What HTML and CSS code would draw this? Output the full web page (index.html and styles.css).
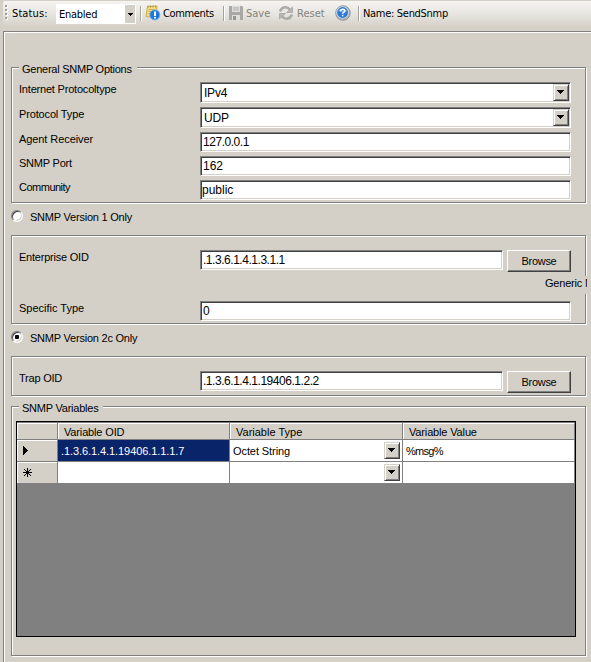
FILE: index.html
```html
<!DOCTYPE html>
<html lang="en">
<head>
<meta charset="utf-8">
<title>SendSnmp</title>
<link rel="stylesheet" href="styles.css">
</head>
<body>
<header class="toolbar">
  <span class="grip"><i></i><i></i><i></i><i></i></span>
  <span class="status-label">Status:</span>
  <div class="status-combo"><span>Enabled</span><b><svg width="5" height="3" viewBox="0 0 5 3" shape-rendering="crispEdges"><path d="M0 0h5v1H0zM1 1h3v1H1zM2 2h1v1H2z"/></svg></b></div>
  <span class="sep sep-first"></span>
  <svg class="icon" width="16" height="16" viewBox="0 0 16 16">
    <path d="M2.5 1.5l9.5-.5-1 12-10-1.5z" fill="#f7e07a" stroke="#c6a548" stroke-width=".9"/>
    <path d="M3 2.5V.5M5.5 2.5V.5M8 2.5V.5M10.5 2.5V.5" stroke="#a88f45" stroke-width=".9"/>
    <path d="M3.5 4.5h6M3.3 6.5h3M3 8.5h2" stroke="#c4a850" stroke-width=".8"/>
    <circle cx="9.8" cy="9.9" r="5" fill="#1c78dc" stroke="#6fa6e6" stroke-width=".9"/>
    <path d="M9 6.5h2V11H9zM9 12h2v1.6H9z" fill="#fff"/>
  </svg>
  <span class="t-comments">Comments</span>
  <span class="sep sep-save"></span>
  <svg class="icon" width="16" height="16" viewBox="0 0 16 16">
    <path d="M1 1h13l1 1v13H1z" fill="#a9a8a6"/>
    <path d="M4 1h8v6H4zM4 10h8v5H4z" fill="#dededc"/>
    <path d="M5 3h6M5 5h6" stroke="#b1b1af"/>
    <path d="M5 11h3v4H5z" fill="#969695"/>
  </svg>
  <span class="t-save">Save</span>
  <svg class="icon icon-reset" width="16" height="16" viewBox="0 0 16 16" fill="none" stroke="#acaba8" stroke-width="2.6">
    <path d="M2 6.5C4 1.5 9 1 12 4.5M14 9.5C12 14.5 7 15 4 11.5"/>
    <path d="M14.5 2v5.5H8.5zM1.5 14V8.5h6z" fill="#b8b7b4" stroke="#a8a7a4" stroke-width=".8"/>
  </svg>
  <span class="t-reset">Reset</span>
  <svg class="icon icon-help" width="16" height="16" viewBox="0 0 16 16">
    <circle cx="8" cy="8" r="7.3" fill="#b4b7bc" stroke="#7f868e" stroke-width=".8"/>
    <circle cx="7.5" cy="7.4" r="6.2" fill="#d5dbe3"/>
    <circle cx="7.6" cy="7.5" r="5.4" fill="#2b7bd6"/>
    <path d="M3 6a5 4 0 0 1 9 0q-4 2-9 0z" fill="#69a8ec"/>
    <path d="M5.6 6.2q0-2 2.1-2t2.1 1.7q0 1-1.1 1.5t-1.1 1.4M7.6 9.7v1.6" stroke="#fff" stroke-width="1.5" fill="none"/>
  </svg>
  <span class="sep sep-name"></span>
  <span class="t-name">Name: SendSnmp</span>
</header>

<main class="panel">
  <section class="group general">
    <h2><span class="w-general">General SNMP Options</span></h2>
    <div class="row tall"><label class="w-inet">Internet Protocoltype</label><div class="field combo"><span class="w-ip">IPv4</span><b class="drop"></b></div></div>
    <div class="row tall"><label class="w-proto">Protocol Type</label><div class="field combo"><span class="w-ip">UDP</span><b class="drop"></b></div></div>
    <div class="row"><label class="w-agent">Agent Receiver</label><div class="field"><span class="w-oid">127.0.0.1</span></div></div>
    <div class="row"><label class="w-port">SNMP Port</label><div class="field"><span>162</span></div></div>
    <div class="row"><label class="w-comm">Community</label><div class="field flush"><span>public</span></div></div>
  </section>

  <div class="option"><i class="radio"></i><span>SNMP Version 1 Only</span></div>

  <section class="group version1">
    <div class="row oid"><label class="w-ent">Enterprise OID</label><div class="field"><span class="w-oid">.1.3.6.1.4.1.3.1.1</span></div><button>Browse</button></div>
    <div class="generic">Generic N</div>
    <div class="row"><label>Specific Type</label><div class="field"><span>0</span></div></div>
  </section>

  <div class="option second"><i class="radio on"></i><span>SNMP Version 2c Only</span></div>

  <section class="group version2">
    <div class="row oid"><label class="w-trap">Trap OID</label><div class="field"><span class="w-oid">.1.3.6.1.4.1.19406.1.2.2</span></div><button>Browse</button></div>
  </section>

  <section class="group variables">
    <h2><span class="w-vars">SNMP Variables</span></h2>
    <div class="grid">
      <div class="head"></div><div class="head"><span class="w-head">Variable OID</span></div><div class="head"><span>Variable Type</span></div><div class="head"><span class="w-head">Variable Value</span></div>
      <div class="mark"><svg width="5" height="9" viewBox="0 0 5 9" shape-rendering="crispEdges"><path d="M0 0h1v9H0zM1 1h1v7H1zM2 2h1v5H2zM3 3h1v3H3zM4 4h1v1H4z"/></svg></div><div class="cell selected"><span class="w-oid3">.1.3.6.1.4.1.19406.1.1.1.7</span></div><div class="cell"><span class="w-octet">Octet String</span><b class="drop"></b></div><div class="cell"><span class="w-msg">%msg%</span></div>
      <div class="mark star"><svg width="9" height="9" viewBox="0 0 9 9" shape-rendering="crispEdges"><path d="M4 0h1v9H4zM0 4h9v1H0zM1 1h1v1H1zM2 2h1v1H2zM3 3h3v3H3zM6 2h1v1H6zM7 1h1v1H7zM2 6h1v1H2zM1 7h1v1H1zM6 6h1v1H6zM7 7h1v1H7z"/></svg></div><div class="cell"></div><div class="cell"><b class="drop"></b></div><div class="cell"></div>
    </div>
  </section>
</main>
</body>
</html>
```
FILE: styles.css
```css
* { box-sizing: border-box; }
body {
  margin: 0;
  width: 591px;
  height: 662px;
  overflow: hidden;
  background: #d4d0c8;
  color: #000;
  font: 11px/13px "Liberation Sans", Arial, sans-serif;
}
span, label, button { white-space: nowrap; }

/* toolbar */
.toolbar {
  height: 25px;
  margin: 1px 0 5px 3px;
  padding-left: 2px;
  display: flex;
  align-items: flex-start;
  background: linear-gradient(#f5f4f1, #e8e6e1 50%, #d6d2ca);
  border-radius: 2px 0 0 2px;
  font-family: "DejaVu Sans Condensed", "DejaVu Sans", sans-serif;
  font-size: 11px;
}
.toolbar > span { padding-top: 6px; flex: none; }
.toolbar .grip { width: 7px; padding-top: 4px; display: grid; gap: 2px; }
.grip i { width: 2px; height: 2px; background: #a09d97; box-shadow: 1px 1px #fff; }
.status-label { width: 44px; letter-spacing: .1px; }
.status-combo {
  flex: none;
  width: 80px;
  height: 20px;
  margin-top: 3px;
  padding: 4px 1px 1px 3px;
  display: flex;
  justify-content: space-between;
  background: #fff;
  letter-spacing: -.25px;
}
.status-combo b { width: 10px; height: 18px; margin-top: -3px; background: #d4d0c8; display: grid; place-items: center; }
.toolbar .sep { width: 2px; height: 15px; margin-top: 5px; padding: 0; background: linear-gradient(90deg, #a5a29c 50%, #fff 50%); }
.toolbar .sep-first { margin-left: 4px; margin-right: 3px; }
.icon { flex: none; margin-top: 4px; }
.t-comments { width: 60px; margin-left: 2px; letter-spacing: -.35px; }
.toolbar .sep-save { margin-right: 3px; }
.t-save, .t-reset { color: #85827c; }
.t-save { margin-left: 2px; width: 32px; }
.t-reset { margin-left: 3px; width: 38px; }
.toolbar .sep-name { margin-left: 7px; margin-right: 3px; }
.t-name { letter-spacing: -.3px; }

/* etched panel and group boxes */
.panel {
  height: 640px;
  margin-left: 3px;
  padding: 35px 0 0 7px;
  border: solid #808080;
  border-width: 1px 0 0 1px;
  box-shadow: inset 1px 1px #fff;
}
.group {
  width: 575px;
  padding-left: 7px;
  border: 1px solid #808080;
  box-shadow: 1px 1px #fff, inset 1px 1px #fff;
}
h2 {
  width: max-content;
  height: 13px;
  margin: -5px 0 6px;
  padding: 0 5px 0 3px;
  background: #d4d0c8;
  font: inherit;
}
.general { height: 136px; }
.version1 { height: 89px; padding-top: 14px; }
.version2 { height: 40px; padding-top: 14px; }
.variables { height: 250px; margin-top: 10px; padding-left: 4px; }
.variables h2 { margin-left: 3px; }

.row { display: flex; height: 24px; align-items: flex-start; }
.row.tall { height: 25px; }
label { width: 181px; flex: none; padding-top: 1px; }
.field {
  width: 371px;
  height: 20px;
  padding: 2px 1px;
  display: flex;
  justify-content: space-between;
  background: #fff;
  border: 1px solid;
  border-color: #808080 #fff #fff #808080;
  box-shadow: inset 1px 1px #404040, inset -1px -1px #d4d0c8;
}
.field span { padding: 1px 0 0 1px; font-size: 12px; line-height: 13px; }
.field.flush span { padding-left: 0; }
.combo { height: 21px; padding: 1px; }
.combo span { padding: 3px 0 0 2px; }
.drop {
  width: 16px;
  height: 17px;
  flex: none;
  border: 1px solid;
  border-color: #d4d0c8 #404040 #404040 #d4d0c8;
  box-shadow: inset 1px 1px #fff, inset -1px -1px #808080;
  background:
    linear-gradient(#000, #000) 3px 5px / 7px 1px no-repeat,
    linear-gradient(#000, #000) 4px 6px / 5px 1px no-repeat,
    linear-gradient(#000, #000) 5px 7px / 3px 1px no-repeat,
    linear-gradient(#000, #000) 6px 8px / 1px 1px no-repeat,
    #d4d0c8;
}
.oid .field { width: 303px; }
button {
  width: 64px;
  height: 22px;
  margin-left: 4px;
  padding: 1px 0 0;
  background: #d4d0c8;
  border: 1px solid;
  border-color: #fff #404040 #404040 #fff;
  box-shadow: inset -1px -1px #808080;
  font: inherit;
  letter-spacing: -.3px;
  color: #000;
}
.version1 .oid { height: 26px; }
.generic {
  width: 42px;
  height: 18px;
  margin: 0 0 7px 526px;
  padding-top: 1px;
  overflow: hidden;
  white-space: nowrap;
  background: #d4d0c8;
  letter-spacing: -.2px;
}

.option { height: 32px; padding-top: 7px; display: flex; gap: 7px; letter-spacing: -.22px; }
.option span { padding-top: 1px; }
.radio {
  width: 12px;
  height: 12px;
  border-radius: 50%;
  border: 1px solid;
  border-color: #808080 #fff #fff #808080;
  background: #fff;
  box-shadow: inset 1px 1px #404040, inset -1px -1px #d4d0c8;
  display: grid;
  place-items: center;
}
.radio.on::before { content: ""; width: 4px; height: 4px; border-radius: 1px; background: #000; }

/* text tracking */
.w-general { letter-spacing: -.25px; }
.w-vars { letter-spacing: -.23px; }
.w-inet { letter-spacing: -.2px; }
.w-proto, .w-head { letter-spacing: -.15px; }
.w-agent, .w-octet { letter-spacing: -.08px; }
.w-port, .w-ent, .w-trap, .w-ip { letter-spacing: -.22px; }
.w-comm { letter-spacing: -.5px; }
.w-oid { letter-spacing: -.46px; }
.w-oid3 { letter-spacing: -.08px; }
.w-msg { letter-spacing: -.7px; }

/* data grid */
.grid {
  width: 560px;
  height: 216px;
  border: 1px solid #000;
  background: #808080;
  display: grid;
  grid-template-columns: 41px 172px 173px 172px;
  grid-template-rows: 18px 22px 21px;
  align-content: start;
}
.head, .mark { background: #d4d0c8; border-right: 1px solid #808080; box-shadow: inset 1px 1px #fff; }
.head { border-top: 1px solid #808080; border-bottom: 1px solid #808080; padding: 3px 0 0 6px; }
.mark { border-bottom: 1px solid #808080; padding: 6px 0 0 6px; line-height: 0; }
.mark.star { border-bottom: 0; }
.cell {
  background: #fff;
  border: solid #808080;
  border-width: 0 1px 1px 0;
  padding: 2px 2px 0 3px;
  display: flex;
  justify-content: flex-end;
}
.cell span { margin-right: auto; padding-top: 3px; }
.cell:nth-last-child(-n+3) { border-bottom: 0; }
.selected { background: #0a246a; color: #fff; }
```
